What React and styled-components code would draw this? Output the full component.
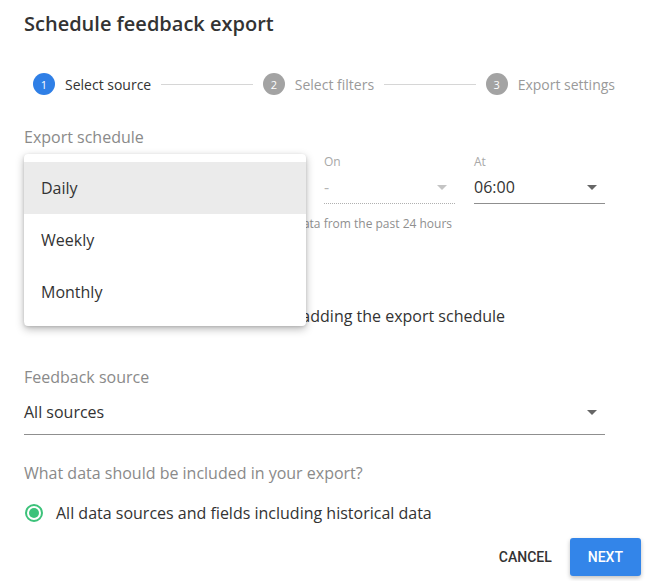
import React from 'react';
import styled, { createGlobalStyle } from 'styled-components';

const GlobalStyle = createGlobalStyle`
  html, body {
    margin: 0;
    padding: 0;
    background: #fff;
  }
  body {
    font-family: "Open Sans", "Liberation Sans", sans-serif;
    color: #333;
  }
`;

const Dialog = styled.div`
  position: relative;
  width: 650px;
  height: 581px;
  box-sizing: border-box;
  padding: 10px 9px 0 24px;
  overflow: hidden;
`;

const Title = styled.h1`
  margin: 0;
  font-size: 20px;
  line-height: 28px;
  font-weight: 600;
  color: #333;
`;

const Stepper = styled.div`
  display: flex;
  align-items: center;
  width: 582px;
  margin: 35px 0 0 9px;
  height: 22px;
`;

const Step = styled.div`
  display: flex;
  align-items: center;
  gap: 10px;
  font-size: 14px;
  color: ${p => (p.active ? '#333' : '#9a9a9a')};
`;

const StepNum = styled.span`
  width: 22px;
  height: 22px;
  border-radius: 50%;
  background: ${p => (p.active ? '#2f7fe6' : '#a3a3a3')};
  color: #fff;
  font-size: 11px;
  display: flex;
  align-items: center;
  justify-content: center;
`;

const StepLine = styled.div`
  flex: 1;
  height: 1px;
  background: #d6d6d6;
  margin: 0 10px;
`;

const SectionLabel = styled.div`
  font-size: 16px;
  line-height: 22px;
  color: #8a8a8a;
  margin-top: ${p => p.top}px;
`;

const ScheduleWrap = styled.div`
  position: relative;
  padding-top: 6px;
`;

const ScheduleRow = styled.div`
  display: grid;
  grid-template-columns: 281px 131px 131px;
  column-gap: 19px;
`;

const Field = styled.div`
  display: flex;
  flex-direction: column;
`;

const FieldLabel = styled.div`
  font-size: 12px;
  line-height: 16px;
  color: #a8a8a8;
  margin-bottom: 5px;
`;

const SelectBox = styled.div`
  display: flex;
  align-items: center;
  justify-content: space-between;
  font-size: 16px;
  line-height: 24px;
  color: ${p => (p.disabled ? '#b5b5b5' : '#333')};
  padding-bottom: ${p => p.pad}px;
  border-bottom: 1px ${p => (p.disabled ? 'dotted #b0b0b0' : 'solid #8f8f8f')};
`;

const Caret = styled.span`
  width: 0;
  height: 0;
  margin-right: 8px;
  border-left: 5px solid transparent;
  border-right: 5px solid transparent;
  border-top: 5px solid ${p => (p.disabled ? '#c4c4c4' : '#666')};
`;

const Helper = styled.div`
  font-size: 12px;
  line-height: 16px;
  color: #8f8f8f;
  margin-top: 12px;
`;

const CheckRow = styled.label`
  display: flex;
  align-items: center;
  gap: 10px;
  margin-top: 72px;
  font-size: 16px;
  line-height: 24px;
  color: #333;
`;

const Checkbox = styled.span`
  width: 16px;
  height: 16px;
  border: 2px solid #777;
  border-radius: 2px;
  box-sizing: border-box;
`;

const Menu = styled.ul`
  position: absolute;
  left: 0;
  top: 6px;
  width: 282px;
  margin: 0;
  padding: 8px 0;
  list-style: none;
  background: #fff;
  border-radius: 4px;
  box-shadow: 0 3px 8px rgba(0, 0, 0, 0.28), 0 1px 3px rgba(0, 0, 0, 0.12);
  z-index: 2;
`;

const MenuItem = styled.li`
  height: 52px;
  display: flex;
  align-items: center;
  padding-left: 17px;
  font-size: 16px;
  color: #333;
  background: ${p => (p.selected ? '#ebebeb' : 'transparent')};
`;

const SourceField = styled.div`
  width: 581px;
  margin-top: 12px;
`;

const RadioRow = styled.label`
  display: flex;
  align-items: center;
  gap: 13px;
  margin-top: 17px;
  padding-left: 1px;
  font-size: 16px;
  line-height: 24px;
  color: #333;
`;

const Radio = styled.span`
  width: 18px;
  height: 18px;
  box-sizing: border-box;
  border: 2px solid #3cc27a;
  border-radius: 50%;
  display: flex;
  align-items: center;
  justify-content: center;
  &::after {
    content: '';
    width: 10px;
    height: 10px;
    border-radius: 50%;
    background: #3cc27a;
  }
`;

const Actions = styled.div`
  display: flex;
  justify-content: flex-end;
  align-items: center;
  gap: 10px;
  margin-top: 13px;
`;

const Button = styled.button`
  font-family: Roboto, "Liberation Sans", sans-serif;
  font-weight: 500;
  font-size: 14px;
  height: 38px;
  padding: 0 ${p => (p.primary ? 18 : 8)}px;
  border: none;
  border-radius: 3px;
  color: ${p => (p.primary ? '#fff' : '#333')};
  background: ${p => (p.primary ? '#3385e9' : 'transparent')};
  box-shadow: ${p => (p.primary ? '0 2px 4px rgba(0,0,0,0.25)' : 'none')};
`;

export default function App() {
  return (
    <Dialog>
      <GlobalStyle />
      <Title>Schedule feedback export</Title>
      <Stepper>
        <Step active>
          <StepNum active>1</StepNum>Select source
        </Step>
        <StepLine />
        <Step>
          <StepNum>2</StepNum>Select filters
        </Step>
        <StepLine />
        <Step>
          <StepNum>3</StepNum>Export settings
        </Step>
      </Stepper>

      <SectionLabel top={31}>Export schedule</SectionLabel>
      <ScheduleWrap>
        <ScheduleRow>
          <Field>
            <FieldLabel>Every</FieldLabel>
            <SelectBox pad={4}>
              Daily
              <Caret />
            </SelectBox>
          </Field>
          <Field>
            <FieldLabel>On</FieldLabel>
            <SelectBox disabled pad={4}>
              -
              <Caret disabled />
            </SelectBox>
          </Field>
          <Field>
            <FieldLabel>At</FieldLabel>
            <SelectBox pad={4}>
              06:00
              <Caret />
            </SelectBox>
          </Field>
        </ScheduleRow>
        <Helper>Every day, an export will be mailed that includes data from the past 24 hours</Helper>
        <CheckRow>
          <Checkbox />
          Include feedback received before adding the export schedule
        </CheckRow>
        <Menu>
          <MenuItem selected>Daily</MenuItem>
          <MenuItem>Weekly</MenuItem>
          <MenuItem>Monthly</MenuItem>
        </Menu>
      </ScheduleWrap>

      <SectionLabel top={38}>Feedback source</SectionLabel>
      <SourceField>
        <SelectBox pad={10}>
          All sources
          <Caret />
        </SelectBox>
      </SourceField>

      <SectionLabel top={27}>What data should be included in your export?</SectionLabel>
      <RadioRow>
        <Radio />
        All data sources and fields including historical data
      </RadioRow>

      <Actions>
        <Button>CANCEL</Button>
        <Button primary>NEXT</Button>
      </Actions>
    </Dialog>
  );
}
